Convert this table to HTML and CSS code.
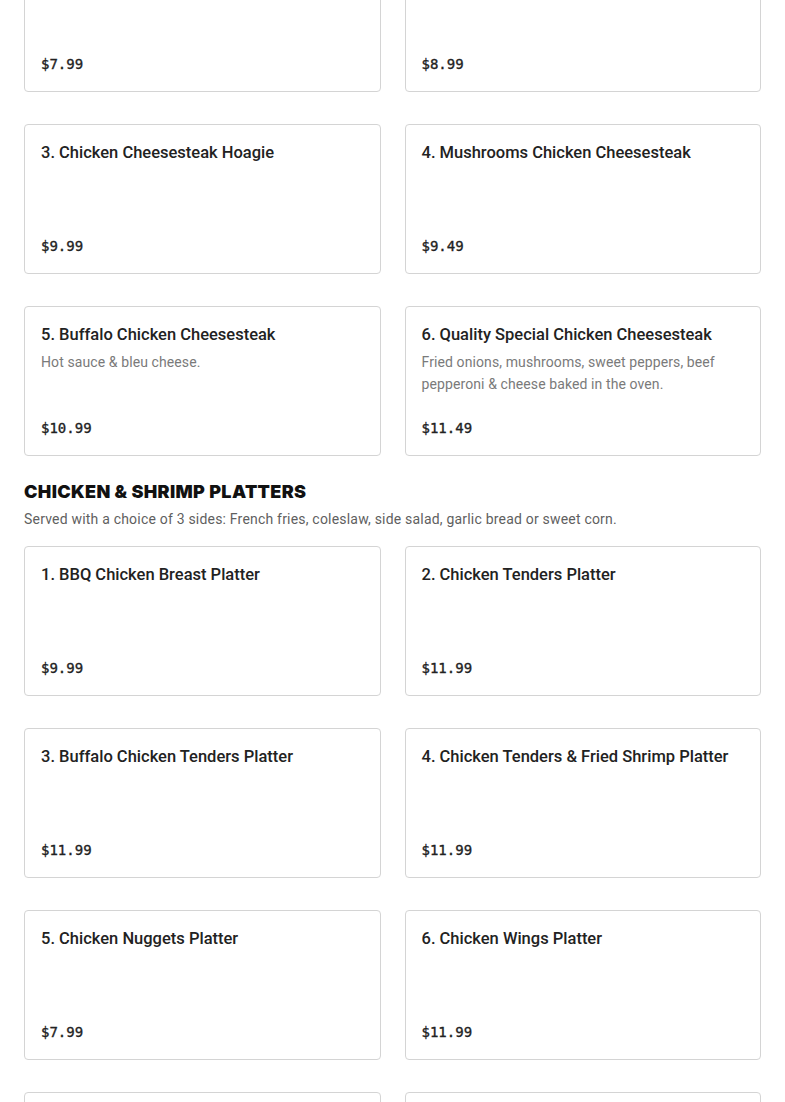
FILE: index.html
```html
<!DOCTYPE html>
<html lang="en">
<head>
<meta charset="utf-8">
<title>Menu</title>
<link rel="stylesheet" href="styles.css">
</head>
<body>
<main class="menu">
  <section class="section section-first">
    <div class="grid">
      <div class="card"><div class="card-title">1. Philly Chicken Cheesesteak</div><div class="price">$7.99</div></div>
      <div class="card"><div class="card-title">2. Chicken Cheesesteak Deluxe</div><div class="price">$8.99</div></div>
      <div class="card"><div class="card-title">3. Chicken Cheesesteak Hoagie</div><div class="price">$9.99</div></div>
      <div class="card"><div class="card-title">4. Mushrooms Chicken Cheesesteak</div><div class="price">$9.49</div></div>
      <div class="card"><div class="card-title">5. Buffalo Chicken Cheesesteak</div><div class="card-desc">Hot sauce &amp; bleu cheese.</div><div class="price">$10.99</div></div>
      <div class="card"><div class="card-title">6. Quality Special Chicken Cheesesteak</div><div class="card-desc">Fried onions, mushrooms, sweet peppers, beef pepperoni &amp; cheese baked in the oven.</div><div class="price">$11.49</div></div>
    </div>
  </section>
  <section class="section">
    <h2 class="section-title">CHICKEN &amp; SHRIMP PLATTERS</h2>
    <p class="section-desc">Served with a choice of 3 sides: French fries, coleslaw, side salad, garlic bread or sweet corn.</p>
    <div class="grid">
      <div class="card"><div class="card-title">1. BBQ Chicken Breast Platter</div><div class="price">$9.99</div></div>
      <div class="card"><div class="card-title">2. Chicken Tenders Platter</div><div class="price">$11.99</div></div>
      <div class="card"><div class="card-title">3. Buffalo Chicken Tenders Platter</div><div class="price">$11.99</div></div>
      <div class="card"><div class="card-title">4. Chicken Tenders &amp; Fried Shrimp Platter</div><div class="price">$11.99</div></div>
      <div class="card"><div class="card-title">5. Chicken Nuggets Platter</div><div class="price">$7.99</div></div>
      <div class="card"><div class="card-title">6. Chicken Wings Platter</div><div class="price">$11.99</div></div>
      <div class="card"><div class="card-title">7. Fried Shrimp Platter</div><div class="price">$12.99</div></div>
      <div class="card"><div class="card-title">8. Fried Fish Platter</div><div class="price">$12.99</div></div>
    </div>
  </section>
</main>
</body>
</html>
```
FILE: styles.css
```css
* { box-sizing: border-box; }
html, body { margin: 0; padding: 0; background: #fff; }
body {
  font-family: Roboto, "Liberation Sans", Arial, sans-serif;
  color: #1f1f1f;
  overflow: hidden;
}
.menu {
  padding: 0 24px;
  margin-top: -58px;
}
.section-first { margin-bottom: 24px; }
.grid {
  display: grid;
  grid-template-columns: 1fr 1fr;
  column-gap: 24px;
  row-gap: 32px;
}
.card {
  display: flex;
  flex-direction: column;
  min-height: 150px;
  border: 1px solid #d4d4d4;
  border-radius: 4px;
  padding: 16px 16px 15px 16px;
}
.card-title {
  font-size: 16.5px;
  font-weight: 500;
  line-height: 24px;
  color: #222;
}
.card-desc {
  margin-top: 4px;
  font-size: 14px;
  line-height: 22px;
  color: #7a7a7a;
  letter-spacing: 0.1px;
}
.price {
  margin-top: auto;
  font-family: "DejaVu Sans Mono", "Liberation Mono", monospace;
  font-size: 14px;
  font-weight: 400;
  -webkit-text-stroke: 0.35px #222;
  line-height: 24px;
  color: #222;
}
.section-title {
  margin: 0;
  font-family: Inter, Roboto, sans-serif;
  font-size: 18px;
  font-weight: 900;
  line-height: 24px;
  letter-spacing: 0.35px;
  color: #111;
}
.section-desc {
  margin: 4px 0 16px;
  font-size: 14px;
  line-height: 22px;
  color: #5f5f5f;
  letter-spacing: 0.2px;
}
```
